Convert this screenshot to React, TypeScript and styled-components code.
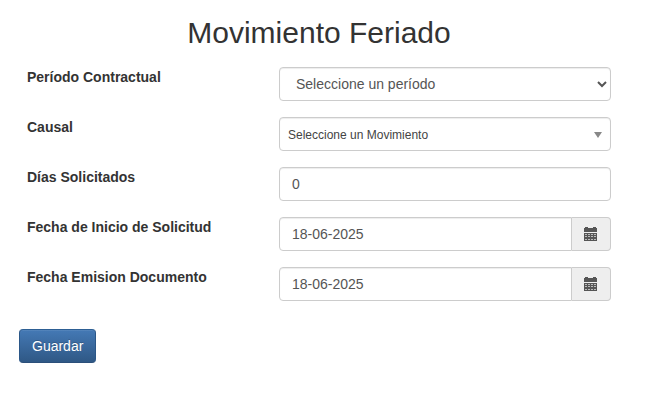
import React from "react";
import styled, { createGlobalStyle } from "styled-components";

const GlobalStyle = createGlobalStyle`
  * {
    box-sizing: border-box;
  }
  body {
    margin: 0;
    background: #fff;
    color: #333;
    font-family: "Liberation Sans", Arial, sans-serif;
    font-size: 14px;
    line-height: 20px;
  }
`;

const Page = styled.main`
  padding: 16px 47px 0 19px;
`;

const Title = styled.h1`
  margin: 0 0 18px;
  padding-right: 24px;
  width: 624px;
  font-size: 30px;
  font-weight: 400;
  line-height: 33px;
  text-align: center;
`;

const Form = styled.form`
  display: flex;
  flex-direction: column;
  gap: 16px;
`;

const Row = styled.div`
  display: grid;
  grid-template-columns: 252px 332px;
  padding-left: 8px;
`;

const Label = styled.label`
  font-weight: 700;
`;

const Input = styled.input`
  flex: 1;
  min-width: 0;
  width: 100%;
  height: 34px;
  padding: 6px 12px;
  border: 1px solid #ccc;
  border-radius: 4px;
  background: #fff;
  box-shadow: inset 0 1px 1px rgba(0, 0, 0, 0.075);
  color: #555;
  font: inherit;
  outline: none;
`;

const Select = styled.select`
  width: 100%;
  height: 34px;
  padding: 6px 0 6px 12px;
  border: 1px solid #ccc;
  border-radius: 4px;
  background: #fff;
  box-shadow: inset 0 1px 1px rgba(0, 0, 0, 0.075);
  color: #555;
  font: inherit;
`;

const Chosen = styled.div`
  display: flex;
  align-items: center;
  justify-content: space-between;
  height: 34px;
  padding: 1px 8px 0 8px;
  border: 1px solid #ccc;
  border-radius: 4px;
  box-shadow: inset 0 1px 1px rgba(0, 0, 0, 0.075);
  color: #444;
  font-size: 12px;
`;

const Caret = styled.span`
  border: solid transparent;
  border-width: 6px 4px 0;
  border-top-color: #888;
`;

const InputGroup = styled.div`
  display: flex;

  ${Input} {
    border-radius: 4px 0 0 4px;
  }
`;

const Addon = styled.span`
  display: flex;
  align-items: center;
  width: 39px;
  padding-left: 12px;
  border: 1px solid #ccc;
  border-left: 0;
  border-radius: 0 4px 4px 0;
  background: #eee;
  color: #555;
`;

const Button = styled.button`
  align-self: flex-start;
  height: 34px;
  margin-top: 12px;
  padding: 6px 12px;
  border: 1px solid;
  border-color: #2d5f94 #2b5788 #2b4f7a;
  border-radius: 4px;
  background: linear-gradient(#4479b5, #2f5885);
  box-shadow: inset 0 1px 0 rgba(255, 255, 255, 0.08);
  color: #fff;
  font: inherit;
  text-shadow: 0 -1px 0 rgba(0, 0, 0, 0.2);
`;

const CalendarIcon = () => (
  <svg width="13" height="14" viewBox="0 0 13 14" shapeRendering="crispEdges">
    <path fill="currentColor" d="M1 0h3v1h5V0h3v1h1v4H0V1h1z" />
    <path fill="currentColor" d="M0 6h13v8H0z" />
    <path
      fill="#bbb"
      d="M1 7h2v1H1zM4 7h2v1H4zM7 7h2v1H7zM10 7h2v1h-2zM1 9h2v1H1zM4 9h2v1H4zM7 9h2v1H7zM10 9h2v1h-2zM1 12h2v1H1zM4 12h2v1H4zM7 12h2v1H7zM10 12h2v1h-2z"
    />
  </svg>
);

function DateField({ id, value }: DateFieldProps) {
  return (
    <InputGroup>
      <Input id={id} defaultValue={value} />
      <Addon>
        <CalendarIcon />
      </Addon>
    </InputGroup>
  );
}

function App() {
  return (
    <Page>
      <GlobalStyle />
      <Title>Movimiento Feriado</Title>
      <Form onSubmit={(e) => e.preventDefault()}>
        <Row>
          <Label htmlFor="periodo">Período Contractual</Label>
          <Select id="periodo">
            <option>Seleccione un período</option>
          </Select>
        </Row>
        <Row>
          <Label>Causal</Label>
          <Chosen>
            Seleccione un Movimiento
            <Caret />
          </Chosen>
        </Row>
        <Row>
          <Label htmlFor="dias">Días Solicitados</Label>
          <Input id="dias" defaultValue="0" />
        </Row>
        <Row>
          <Label htmlFor="inicio">Fecha de Inicio de Solicitud</Label>
          <DateField id="inicio" value="18-06-2025" />
        </Row>
        <Row>
          <Label htmlFor="emision">Fecha Emision Documento</Label>
          <DateField id="emision" value="18-06-2025" />
        </Row>
        <Button type="submit">Guardar</Button>
      </Form>
    </Page>
  );
}

export default App;

type DateFieldProps = {
  id: string;
  value: string;
};
